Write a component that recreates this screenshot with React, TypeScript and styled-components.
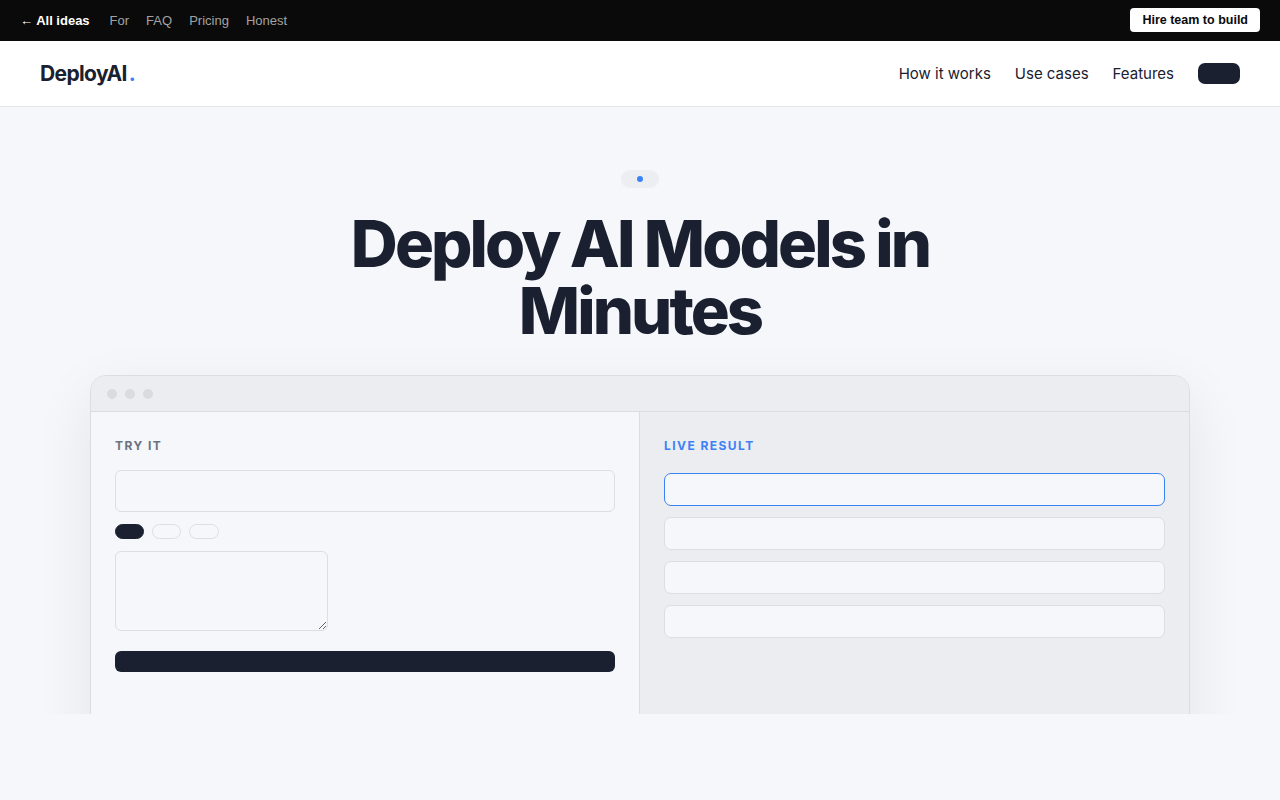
import React from "react";
import styled, { createGlobalStyle } from "styled-components";

const GlobalStyle = createGlobalStyle`
  * { box-sizing: border-box; }
  body {
    margin: 0;
    background: #f5f7fa;
    font-family: Inter, "Noto Sans", sans-serif;
    color: #1a2030;
  }
`;

const TopBar = styled.div`
  height: 41px;
  background: #0a0a0a;
  display: flex;
  align-items: center;
  justify-content: space-between;
  padding: 0 20px 1px;
  font-family: "Liberation Sans", Arial, sans-serif;
  font-size: 13px;
`;

const TopLinks = styled.div`
  display: flex;
  align-items: center;
  gap: 17px;
`;

const BackLink = styled.a`
  color: #fff;
  font-weight: 700;
  margin-right: 3px;
  text-decoration: none;
`;

const TopLink = styled.a`
  color: #a3a3a3;
  text-decoration: none;
`;

const HireButton = styled.button`
  background: #fff;
  color: #0a0a0a;
  border: 0;
  border-radius: 4px;
  height: 24px;
  padding: 0 12px;
  font-family: "Liberation Sans", Arial, sans-serif;
  font-weight: 700;
  font-size: 12.5px;
`;

const Header = styled.header`
  height: 66px;
  background: #fff;
  border-bottom: 1px solid #e5e7eb;
  display: flex;
  align-items: center;
  justify-content: space-between;
  padding: 0 40px;
`;

const Logo = styled.div`
  font-size: 21px;
  font-weight: 700;
  letter-spacing: -0.03em;
  color: #1a2030;
  span {
    color: #3b82f6;
    margin-left: 2px;
  }
`;

const Nav = styled.nav`
  display: flex;
  align-items: center;
  gap: 24px;
`;

const NavLink = styled.a`
  font-size: 15px;
  color: #1a2030;
  letter-spacing: 0;
  text-decoration: none;
`;

const NavButton = styled.button`
  width: 42px;
  height: 21px;
  border: 0;
  border-radius: 7px;
  background: #1a2030;
`;

const Hero = styled.section`
  height: 607px;
  overflow: hidden;
  display: flex;
  flex-direction: column;
  align-items: center;
  padding-top: 63px;
`;

const Pill = styled.div`
  flex: none;
  width: 38px;
  height: 18px;
  border-radius: 9px;
  background: #eceef2;
  display: flex;
  align-items: center;
  justify-content: center;
  &::after {
    content: "";
    width: 6px;
    height: 6px;
    border-radius: 50%;
    background: #3b82f6;
  }
`;

const Title = styled.h1`
  margin: 22px 0 0;
  font-size: 65px;
  line-height: 67px;
  font-weight: 800;
  letter-spacing: -0.045em;
  text-align: center;
  color: #1a2030;
`;

const Window = styled.div`
  flex: none;
  margin-top: 31px;
  width: 1100px;
  border: 1px solid #dcdde1;
  border-radius: 16px;
  overflow: hidden;
  box-shadow: 0 20px 60px rgba(20, 30, 50, 0.08);
  background: #f5f7fa;
`;

const TitleBar = styled.div`
  height: 36px;
  background: #ecedf0;
  border-bottom: 1px solid #dcdde1;
  display: flex;
  align-items: center;
  gap: 8px;
  padding-left: 16px;
`;

const Dot = styled.span`
  width: 10px;
  height: 10px;
  border-radius: 50%;
  background: #dadbde;
`;

const Panes = styled.div`
  display: grid;
  grid-template-columns: 548px 1fr;
  min-height: 420px;
`;

const Pane = styled.div<{ $alt?: boolean }>`
  padding: 25px 24px 24px;
  background: ${(p) => (p.$alt ? "#ecedf1" : "#f5f7fa")};
  border-left: ${(p) => (p.$alt ? "1px solid #dcdde1" : "0")};
  display: flex;
  flex-direction: column;
`;

const Label = styled.div<{ $accent?: boolean }>`
  font-size: 12px;
  line-height: 18px;
  font-weight: 700;
  letter-spacing: 0.12em;
  color: ${(p) => (p.$accent ? "#3b82f6" : "#6b7280")};
`;

const Input = styled.div`
  margin-top: 15px;
  height: 42px;
  border: 1px solid #dcdee3;
  border-radius: 6px;
  background: #f5f7fa;
`;

const Chips = styled.div`
  display: flex;
  gap: 8px;
  margin-top: 12px;
`;

const Chip = styled.span<{ $active?: boolean; $w: number }>`
  width: ${(p) => p.$w}px;
  height: 15px;
  border-radius: 8px;
  background: ${(p) => (p.$active ? "#1a2030" : "transparent")};
  border: 1px solid ${(p) => (p.$active ? "#1a2030" : "#dcdee3")};
`;

const TextArea = styled.textarea`
  margin-top: 12px;
  width: 213px;
  height: 80px;
  border: 1px solid #dcdee3;
  border-radius: 6px;
  background: #f5f7fa;
  font-family: inherit;
`;

const RunButton = styled.button`
  margin-top: 20px;
  height: 21px;
  border: 0;
  border-radius: 6px;
  background: #1a2030;
`;

const Results = styled.div`
  margin-top: 18px;
  display: flex;
  flex-direction: column;
  gap: 11px;
`;

const ResultRow = styled.div<{ $active?: boolean }>`
  height: 33px;
  border-radius: 7px;
  background: #f5f7fa;
  border: 1px solid ${(p) => (p.$active ? "#3b82f6" : "#dcdee3")};
`;

export default function App() {
  return (
    <>
      <GlobalStyle />
      <TopBar>
        <TopLinks>
          <BackLink>← All ideas</BackLink>
          <TopLink>For</TopLink>
          <TopLink>FAQ</TopLink>
          <TopLink>Pricing</TopLink>
          <TopLink>Honest</TopLink>
        </TopLinks>
        <HireButton>Hire team to build</HireButton>
      </TopBar>
      <Header>
        <Logo>
          DeployAI<span>.</span>
        </Logo>
        <Nav>
          <NavLink>How it works</NavLink>
          <NavLink>Use cases</NavLink>
          <NavLink>Features</NavLink>
          <NavButton />
        </Nav>
      </Header>
      <Hero>
        <Pill />
        <Title>
          Deploy AI Models in
          <br />
          Minutes
        </Title>
        <Window>
          <TitleBar>
            <Dot />
            <Dot />
            <Dot />
          </TitleBar>
          <Panes>
            <Pane>
              <Label>TRY IT</Label>
              <Input />
              <Chips>
                <Chip $active $w={29} />
                <Chip $w={29} />
                <Chip $w={30} />
              </Chips>
              <TextArea />
              <RunButton />
            </Pane>
            <Pane $alt>
              <Label $accent>LIVE RESULT</Label>
              <Results>
                <ResultRow $active />
                <ResultRow />
                <ResultRow />
                <ResultRow />
              </Results>
            </Pane>
          </Panes>
        </Window>
      </Hero>
    </>
  );
}
